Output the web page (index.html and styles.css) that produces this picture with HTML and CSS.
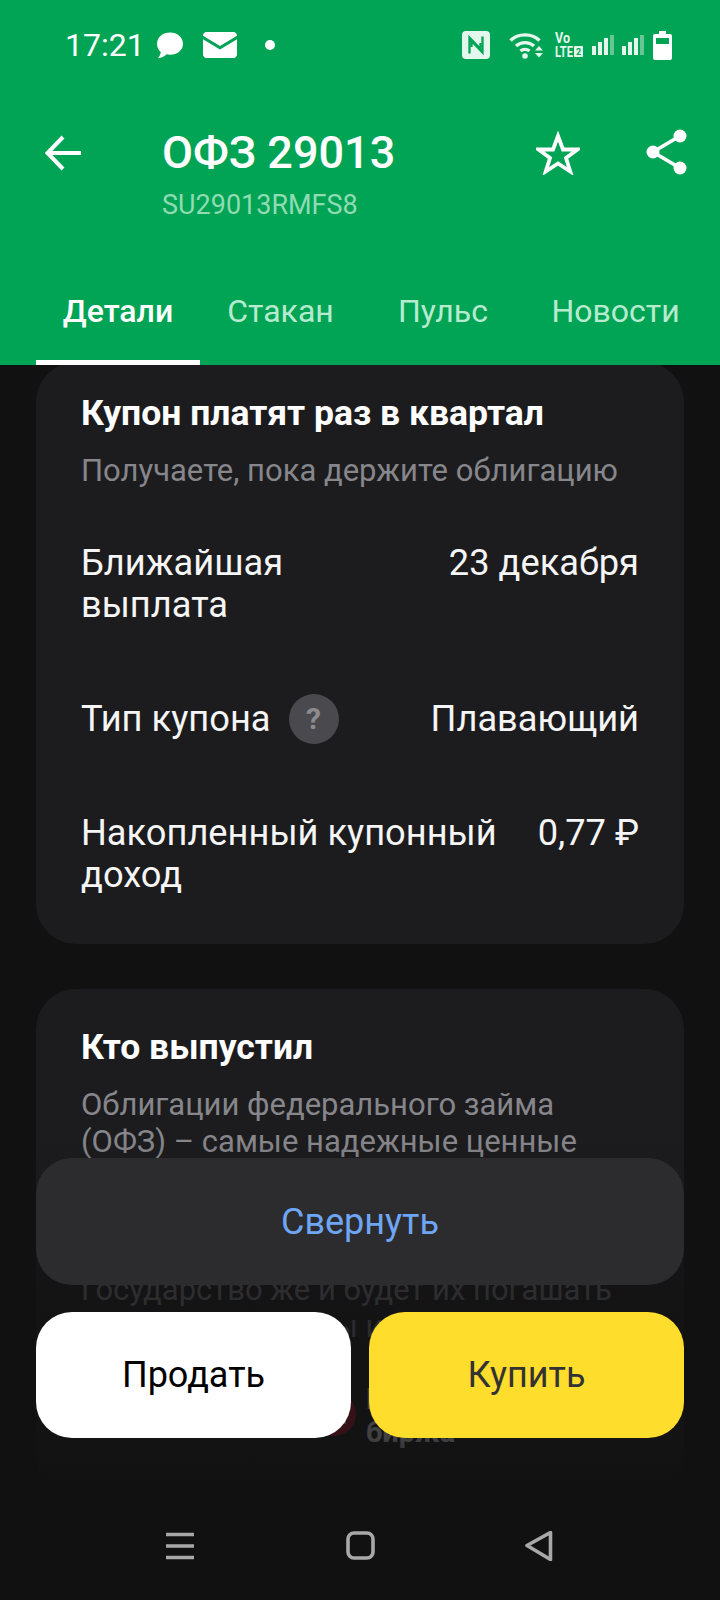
FILE: index.html
```html
<!DOCTYPE html>
<html lang="ru">
<head>
<meta charset="utf-8">
<title>ОФЗ 29013</title>
<link rel="stylesheet" href="styles.css">
</head>
<body>
<div class="screen">
  <header class="top">
    <div class="status">
      <div class="status-left">
        <span class="time">17:21</span>
        <svg class="ic-chat" viewBox="0 0 28 28"><path fill="#fff" d="M14 1.500c7.300 0 13 4.800 13 11.200s-5.700 11-13 11c-1.200 0-2.300-.1-3.400-.4C8.500 25.600 5.500 27 1.800 27.300c1.500-1.600 2.700-3.700 3-6C2.500 19 1 16 1 12.700 1 6.300 6.700 1.500 14 1.500z"/></svg>
        <svg class="ic-mail" viewBox="0 0 34 26"><path fill="#fff" d="M3.500 0h27C32.400 0 34 1.600 34 3.500v.3L17 14 0 3.800v-.3C0 1.600 1.600 0 3.500 0zM0 7.200l17 10.200L34 7.200v15.300c0 1.900-1.600 3.500-3.500 3.500h-27C1.600 26 0 24.400 0 22.500z"/></svg>
        <span class="dot"></span>
      </div>
      <div class="status-right">
        <svg class="ic-nfc" viewBox="0 0 28 28"><rect width="28" height="28" rx="4" fill="#e3f7ec"/><g fill="none" stroke="#01a454" stroke-width="2.300"><path d="M7.500 22.500V6.500L18.500 18v-6"/><path d="M20.500 5.500v16L9.500 10v6"/></g></svg>
        <svg class="ic-wifi" viewBox="0 0 34 28"><g fill="none" stroke="#e3f7ec" stroke-width="3.400"><path d="M1.500 9.500C9 2 23 2 30.500 9.500"/><path d="M7 15c5-4.500 13-4.500 18 0"/><path d="M11.500 20c2.500-2 6.500-2 9 0"/></g><circle cx="16" cy="25" r="2.800" fill="#e3f7ec"/><path fill="#e3f7ec" d="M30 15l4 4.500h-8zM26 22h8l-4 4.500z"/></svg>
        <svg class="ic-volte" viewBox="0 0 28 26"><text class="volte-a" x="0" y="11" textLength="15" lengthAdjust="spacingAndGlyphs">Vo</text><text class="volte-a" x="0" y="25" textLength="18" lengthAdjust="spacingAndGlyphs">LTE</text><rect x="19" y="14" width="9" height="11" rx="1" fill="#e3f7ec"/><text class="volte-b" x="21" y="23">2</text></svg>
        <svg class="ic-signal" viewBox="0 0 22 20"><path fill="#e3f7ec" d="M0 11h4v9H0zM6 7h4v13H6zM12 3h4v17h-4z"/><path fill="#66c795" d="M18 0h4v20h-4z"/></svg>
        <svg class="ic-signal" viewBox="0 0 22 20"><path fill="#e3f7ec" d="M0 11h4v9H0zM6 7h4v13H6zM12 3h4v17h-4z"/><path fill="#66c795" d="M18 0h4v20h-4z"/></svg>
        <svg class="ic-batt" viewBox="0 0 19 29"><path fill="#fff" fill-rule="evenodd" d="M6 0h7v3h4a2 2 0 0 1 2 2v22a2 2 0 0 1-2 2H2a2 2 0 0 1-2-2V5a2 2 0 0 1 2-2h4zM3 7v6h13V7z"/></svg>
      </div>
    </div>
    <div class="titlebar">
      <svg class="ic-back" viewBox="0 0 36 36"><path fill="none" stroke="#fff" stroke-width="4" d="M36 18H3M18 2L2.500 18 18 34"/></svg>
      <div class="titles">
        <div class="title">ОФЗ 29013</div>
        <div class="isin">SU29013RMFS8</div>
      </div>
      <svg class="ic-star" viewBox="0 0 44 44"><path fill="none" stroke="#fff" stroke-width="3.800" d="M22 5l5 13.500h14.500L30 27l4.300 13.500L22 32.500 9.700 40.500 14 27 2.500 18.500H17z"/></svg>
      <svg class="ic-share" viewBox="0 0 42 46"><g fill="#fff"><circle cx="34" cy="7" r="6.500"/><circle cx="7" cy="23" r="6.500"/><circle cx="34" cy="39" r="6.500"/></g><path fill="none" stroke="#fff" stroke-width="3.600" d="M34 7L7 23l27 16"/></svg>
    </div>
    <nav class="tabs">
      <span class="tab tab-active">Детали</span>
      <span class="tab tab-narrow">Стакан</span>
      <span class="tab">Пульс</span>
      <span class="tab tab-last">Новости</span>
    </nav>
  </header>

  <main class="scroll">
    <section class="card card-coupon">
      <h2 class="card-title">Купон платят раз в квартал</h2>
      <p class="card-sub">Получаете, пока держите облигацию</p>
      <div class="rows">
        <div class="row"><span class="label label-narrow">Ближайшая выплата</span><span class="value">23 декабря</span></div>
        <div class="row"><span class="label label-help">Тип купона <span class="help">?</span></span><span class="value">Плавающий</span></div>
        <div class="row"><span class="label label-wide">Накопленный купонный доход</span><span class="value">0,77 ₽</span></div>
      </div>
    </section>
    <section class="card card-issuer">
      <h2 class="card-title">Кто выпустил</h2>
      <p class="card-text">Облигации федерального займа (ОФЗ) – самые надежные ценные бумаги. Их выпускает Министерство финансов, то есть само российское государство.<br>Государство же и будет их погашать<br>и оплатить купоны инвесторам</p>
      <div class="exchange">
        <svg class="ex-mark" viewBox="0 0 44 44"><circle cx="22" cy="22" r="22" fill="#c8102e"/><path fill="#fff" d="M12 32V14h6l4 7 4-7h8v18z"/></svg>
        <span class="ex-name">Московская<br>биржа</span>
      </div>
    </section>
  </main>

  <div class="actions">
    <button class="btn btn-collapse">Свернуть</button>
    <div class="trade">
      <button class="btn btn-sell">Продать</button>
      <button class="btn btn-buy">Купить</button>
    </div>
  </div>

  <footer class="navbar">
    <svg class="nav-ic" viewBox="0 0 30 30"><path fill="none" stroke="#a8a8a8" stroke-width="3.400" d="M1 3.500h28M1 15h28M1 26.500h28"/></svg>
    <svg class="nav-ic" viewBox="0 0 30 30"><rect x="3" y="2" width="25" height="25" rx="6" fill="none" stroke="#a8a8a8" stroke-width="3.600"/></svg>
    <svg class="nav-ic" viewBox="0 0 30 30"><path fill="none" stroke="#a8a8a8" stroke-width="3.600" stroke-linejoin="round" d="M3 14.500L26.500 1.500v27z"/></svg>
  </footer>
</div>
</body>
</html>
```

FILE: styles.css
```css
* { box-sizing: border-box; }
html, body { margin: 0; padding: 0; }
body { background: #111112; font-family: Roboto, "Noto Sans", sans-serif; }
.screen { position: relative; width: 720px; height: 1600px; display: flex; flex-direction: column; overflow: hidden; background: #111112; }

.top { height: 365px; flex: none; background: #01a454; color: #fff; position: relative; z-index: 2; }
.status { height: 90px; padding: 30px 48px 0 65px; display: flex; justify-content: space-between; align-items: flex-start; }
.status-left { display: flex; align-items: center; height: 30px; }
.time { font-size: 32px; line-height: 30px; }
.ic-chat { width: 28px; height: 28px; margin-left: 11px; }
.ic-mail { width: 34px; height: 26px; margin-left: 19px; }
.dot { width: 10px; height: 10px; border-radius: 50%; background: #fff; margin-left: 28px; }
.status-right { display: flex; align-items: center; height: 30px; }
.status-right svg { display: block; flex: none; overflow: visible; }
.ic-nfc { width: 28px; height: 28px; margin-right: 19px; }
.ic-wifi { width: 34px; height: 28px; margin-right: 12px; }
.ic-volte { width: 28px; height: 26px; margin-right: 9px; }
.volte-a { font: 700 14px Roboto, sans-serif; fill: #e3f7ec; }
.volte-b { font: 700 9px Roboto, sans-serif; fill: #01a454; }
.ic-signal { width: 22px; height: 20px; margin-right: 8px; }
.ic-batt { width: 19px; height: 29px; margin-left: 1px; }

.titlebar { display: flex; align-items: flex-start; padding: 39px 32px 0 45px; height: 190px; }
.ic-back { width: 36px; height: 36px; margin-top: 6px; flex: none; }
.titles { margin-left: 81px; flex: 1; }
.title { font-size: 45px; line-height: 48px; font-weight: 500; }
.isin { font-size: 27px; line-height: 32px; margin-top: 12px; color: #8fdcb4; }
.ic-star { width: 44px; height: 44px; margin-top: 2px; flex: none; }
.ic-share { width: 42px; height: 46px; margin-left: 66px; flex: none; }

.tabs { position: absolute; left: 36px; right: 0; bottom: 0; height: 85px; display: flex; }
.tab { display: flex; justify-content: center; align-items: flex-start; padding-top: 13px; font-size: 32px; line-height: 36px; color: #b7ebd0; width: 164px; }
.tab-active { color: #fff; font-weight: 500; border-bottom: 5px solid #fff; }
.tab-narrow { width: 161px; }
.tab-last { margin-left: -1px; width: 183px; }

.scroll { flex: 1; min-height: 0; overflow: hidden; padding: 0 36px; }
.card { background: #1c1c1e; border-radius: 40px; padding: 0 45px; }
.card-coupon { margin-top: -3px; height: 582px; padding-top: 31px; }
.card-issuer { margin-top: 45px; height: 510px; padding-top: 38px; }
.card-title { margin: 0; font-size: 35.500px; line-height: 40px; font-weight: 700; color: #fff; }
.card-sub { margin: 18px 0 0; font-size: 31px; line-height: 40px; color: #86868b; }
.card-text { margin: 19px 0 0; font-size: 31px; line-height: 37px; color: #86868b; }
.rows { margin-top: 51px; display: flex; flex-direction: column; gap: 72px; }
.row { display: flex; justify-content: space-between; align-items: flex-start; font-size: 36.250px; line-height: 42px; color: #f5f5f5; }
.label-narrow { width: 260px; }
.label-wide { width: 425px; }
.label-help { display: flex; align-items: center; }
.help { width: 50px; height: 50px; border-radius: 50%; margin: -4px 0 -4px 18px; background: #4a4a4e; color: #8c8c90; font-size: 30px; font-weight: 700; line-height: 50px; text-align: center; }

.exchange { display: flex; align-items: flex-start; gap: 10px; margin: 38px 0 0 231px; }
.ex-mark { width: 44px; height: 44px; margin-top: 9px; flex: none; display: block; }
.ex-name { font-size: 29px; line-height: 33px; font-weight: 700; color: #fff; }

.actions { position: absolute; left: 0; right: 0; bottom: 100px; height: 360px; padding: 0 36px 62px; display: flex; flex-direction: column; justify-content: flex-end; gap: 27px; background: linear-gradient(to bottom, rgba(17,17,18,0) 0, rgba(17,17,18,.76) 148px, rgba(17,17,18,.8) 297px, rgba(17,17,18,.97) 345px, #111112 360px); }
.btn { display: block; border: 0; height: 126px; border-radius: 36px; font-family: Roboto, sans-serif; font-size: 36px; }
.btn-collapse { width: 100%; height: 127px; background: #2c2c2e; color: #6ea6f5; flex: none; }
.trade { display: flex; gap: 18px; }
.btn-sell { flex: 1; background: #fff; color: #000; }
.btn-buy { flex: 1; background: #ffdd2d; color: #333; }

.navbar { position: absolute; left: 0; right: 0; bottom: 0; height: 100px; background: #111112; display: flex; align-items: flex-start; justify-content: space-between; padding: 31px 166px 0 165px; }
.nav-ic { width: 30px; height: 30px; display: block; }
```
